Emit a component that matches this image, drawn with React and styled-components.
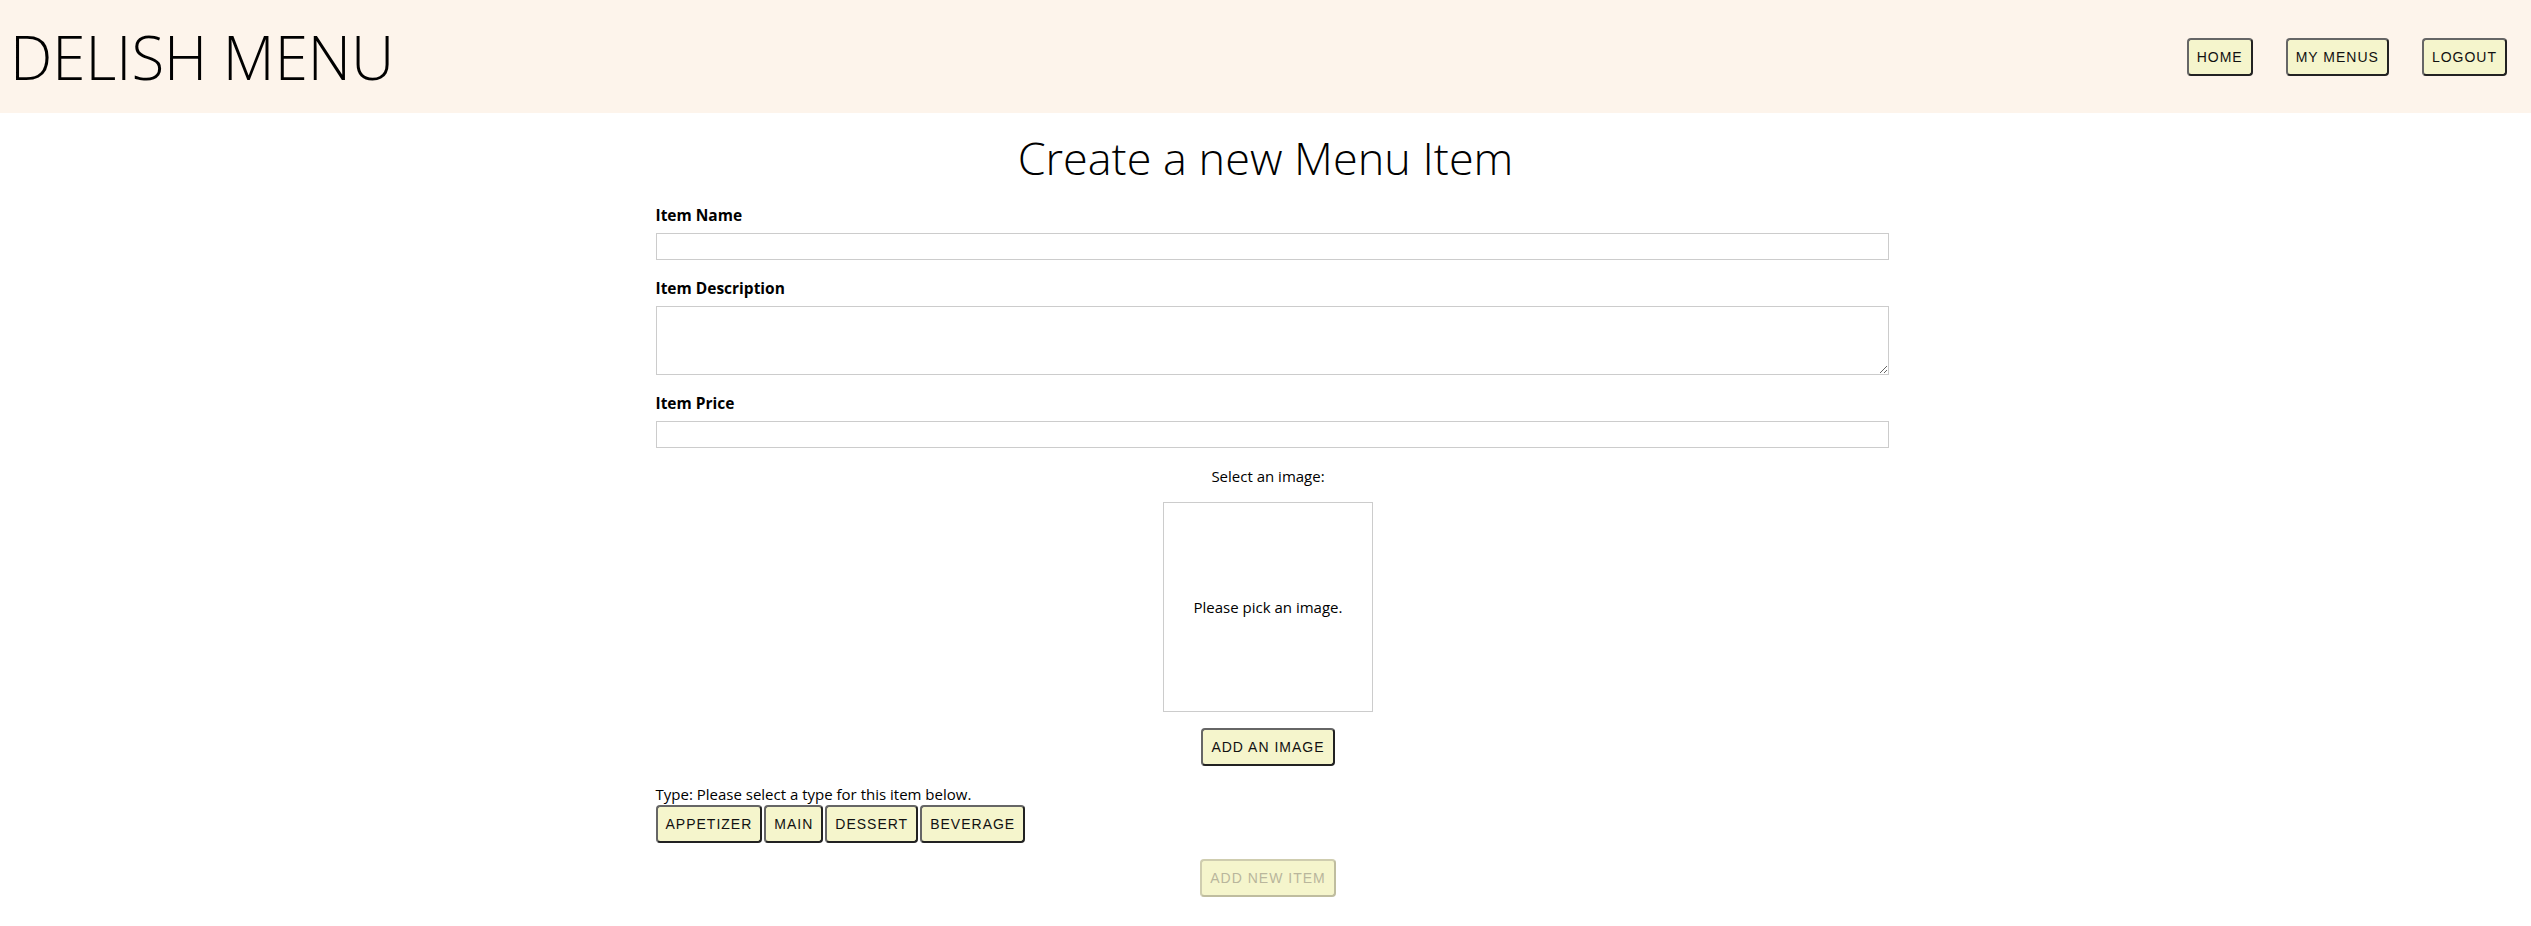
import styled, { createGlobalStyle } from 'styled-components';

const GlobalStyle = createGlobalStyle`
    body {
        margin: 0;
        font-family: 'Open Sans', 'Noto Sans', sans-serif;
        color: #000;
        background: #fff;
    }
`;

const Header = styled.header`
    display: flex;
    align-items: center;
    justify-content: space-between;
    height: 113px;
    padding: 0 24px 0 10px;
    background: #fdf4eb;
`;

const Logo = styled.h1`
    margin: 0;
    font-size: 60px;
    font-weight: 300;
    line-height: 1;
`;

const Nav = styled.nav`
    display: flex;
    gap: 33px;
`;

const Button = styled.button`
    font-family: 'Liberation Sans', Arial, sans-serif;
    font-size: 14px;
    line-height: 16px;
    letter-spacing: 1px;
    text-transform: uppercase;
    padding: 9px 8px;
    color: #111;
    background: #f5f5cc;
    border: 2px solid;
    border-color: #666 #222 #222 #666;
    border-radius: 4px;
    cursor: pointer;

    &:disabled {
        color: #b9b69c;
        border-color: #cfcdaf #bfbd9f #bfbd9f #cfcdaf;
        cursor: default;
    }
`;

const Title = styled.h2`
    margin: 12px 0 0;
    text-align: center;
    font-size: 45px;
    line-height: 65px;
    font-weight: 300;
`;

const Form = styled.form`
    width: 1233px;
    margin: 14px 0 0 calc(50% - 610px);
`;

const Field = styled.div`
    margin-bottom: 17px;
`;

const Label = styled.label`
    display: block;
    margin-bottom: 7px;
    font-size: 15.5px;
    line-height: 22px;
    font-weight: 700;
`;

const Input = styled.input`
    display: block;
    width: 100%;
    height: 27px;
    box-sizing: border-box;
    border: 1px solid #ccc;
    font: inherit;
`;

const TextArea = styled.textarea`
    display: block;
    width: 100%;
    height: 69px;
    box-sizing: border-box;
    border: 1px solid #ccc;
    font: inherit;
`;

const ImagePicker = styled.div`
    display: flex;
    flex-direction: column;
    align-items: center;
    padding-right: 8px;
    font-size: 15px;
    line-height: 22px;
`;

const Preview = styled.div`
    display: flex;
    align-items: center;
    justify-content: center;
    width: 208px;
    height: 208px;
    margin: 15px 0 16px;
    border: 1px solid #ccc;
`;

const TypeSection = styled.div`
    margin-top: 17px;
    font-size: 15px;
    line-height: 22px;
`;

const TypeRow = styled.div`
    display: flex;
    gap: 2px;
`;

const Actions = styled.div`
    display: flex;
    justify-content: center;
    margin-top: 16px;
    padding-right: 8px;
`;

const types = ['Appetizer', 'Main', 'Dessert', 'Beverage'];

export default function App() {
    return (
        <>
            <GlobalStyle />
            <Header>
                <Logo>DELISH MENU</Logo>
                <Nav>
                    <Button>Home</Button>
                    <Button>My Menus</Button>
                    <Button>Logout</Button>
                </Nav>
            </Header>
            <main>
                <Title>Create a new Menu Item</Title>
                <Form onSubmit={(e) => e.preventDefault()}>
                    <Field>
                        <Label htmlFor='name'>Item Name</Label>
                        <Input id='name' type='text' />
                    </Field>
                    <Field>
                        <Label htmlFor='description'>Item Description</Label>
                        <TextArea id='description' />
                    </Field>
                    <Field>
                        <Label htmlFor='price'>Item Price</Label>
                        <Input id='price' type='text' />
                    </Field>
                    <ImagePicker>
                        <div>Select an image:</div>
                        <Preview>Please pick an image.</Preview>
                        <Button type='button'>Add an Image</Button>
                    </ImagePicker>
                    <TypeSection>
                        <div>Type: Please select a type for this item below.</div>
                        <TypeRow>
                            {types.map((t) => (
                                <Button type='button' key={t}>
                                    {t}
                                </Button>
                            ))}
                        </TypeRow>
                    </TypeSection>
                    <Actions>
                        <Button type='submit' disabled>
                            Add New Item
                        </Button>
                    </Actions>
                </Form>
            </main>
        </>
    );
}
